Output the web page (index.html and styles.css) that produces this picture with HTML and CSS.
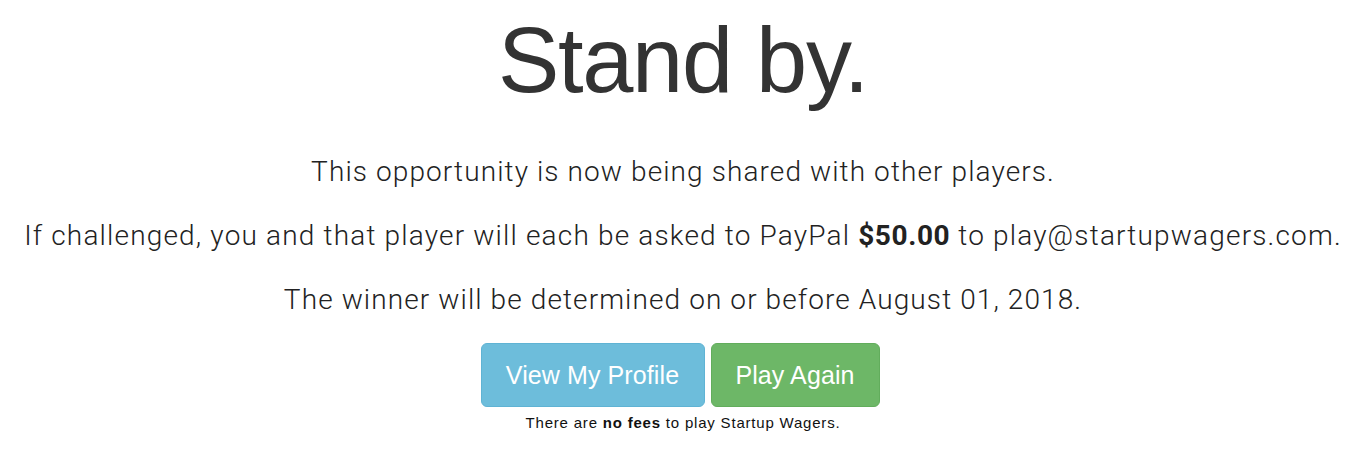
FILE: index.html
```html
<!DOCTYPE html>
<html>
<head>
<meta charset="utf-8">
<link rel="stylesheet" href="styles.css">
</head>
<body>
<main class="page">
  <h1 class="title">Stand by.</h1>
  <p class="lead">This opportunity is now being shared with other players.</p>
  <p class="lead lead-wide">If challenged, you and that player will each be asked to PayPal <strong>$50.00</strong> to play@startupwagers.com.</p>
  <p class="lead">The winner will be determined on or before August 01, 2018.</p>
  <div class="actions">
    <a class="btn btn-info">View My Profile</a>
    <a class="btn btn-success">Play Again</a>
  </div>
  <p class="note">There are <strong>no fees</strong> to play Startup Wagers.</p>
</main>
</body>
</html>
```
FILE: styles.css
```css
html, body { margin: 0; padding: 0; background: #fff; }
.page {
  display: flex;
  flex-direction: column;
  align-items: center;
  font-family: "Liberation Sans", Arial, sans-serif;
  color: #222;
}
.title {
  margin: 5px 0 0;
  font-size: 92px;
  font-weight: 400;
  line-height: 110px;
  color: #333;
  letter-spacing: -1.3px;
}
.lead {
  margin: 0;
  font-family: Roboto, "Liberation Sans", sans-serif;
  font-weight: 300;
  font-size: 28px;
  letter-spacing: 1.1px;
  line-height: 64px;
  white-space: nowrap;
}
.lead-wide { letter-spacing: 1.17px; }
.lead:first-of-type { margin-top: 25px; }
.lead strong { font-weight: 700; letter-spacing: 0.6px; color: #222; }
.actions {
  display: flex;
  gap: 6px;
  margin-top: 11px;
  padding-right: 6px;
}
.btn {
  display: flex;
  align-items: center;
  justify-content: center;
  height: 64px;
  box-sizing: border-box;
  border-radius: 6px;
  font-size: 25px;
  letter-spacing: 0.1px;
  color: #fff;
  padding: 0 20px;
}
.btn-info { background: #6dbddb; border: 1px solid #5fb3d4; width: 224px; }
.btn-success { background: #6db767; border: 1px solid #62ad5c; width: 169px; }
.note {
  margin: 7px 0 0;
  font-size: 15px;
  letter-spacing: 0.8px;
  color: #111;
}
.note strong { font-weight: 700; }
```
